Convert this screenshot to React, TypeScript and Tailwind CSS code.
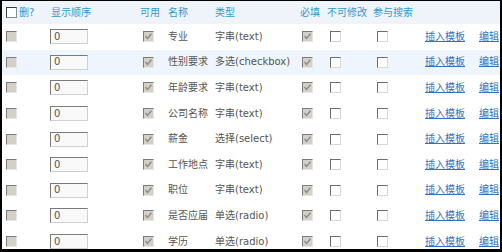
import React from "react";

const rows = [
  { name: "专业", type: "字串(text)" },
  { name: "性别要求", type: "多选(checkbox)" },
  { name: "年龄要求", type: "字串(text)" },
  { name: "公司名称", type: "字串(text)" },
  { name: "薪金", type: "选择(select)" },
  { name: "工作地点", type: "字串(text)" },
  { name: "职位", type: "字串(text)" },
  { name: "是否应届", type: "单选(radio)" },
  { name: "学历", type: "单选(radio)" },
];

const grid =
  "grid grid-cols-[48px_90px_28px_47px_85px_27px_46px_52px_54px_21px] items-center";

function GrayBox() {
  return (
    <div className="w-[11px] h-[11px] bg-[#d4d0c8] border border-t-[#7c7c7c] border-l-[#7c7c7c] border-b-[#e8e6e0] border-r-[#e8e6e0]" />
  );
}

function CheckedDisabled() {
  return (
    <div className="w-[11px] h-[11px] bg-[#d4d0c8] border border-t-[#7c7c7c] border-l-[#7c7c7c] border-b-[#e8e6e0] border-r-[#e8e6e0] flex items-center justify-center">
      <svg width="7" height="7" viewBox="0 0 7 7">
        <path d="M0.5 3 L2.5 5.5 L6.5 0.8" stroke="#8a8a8a" strokeWidth="1.4" fill="none" />
      </svg>
    </div>
  );
}

function WhiteBox() {
  return (
    <div className="w-[11px] h-[11px] bg-white border border-t-[#6c6c6c] border-l-[#6c6c6c] border-b-[#d8d8d8] border-r-[#d8d8d8]" />
  );
}

export default function App() {
  const font = "font-['DejaVu_Sans','Noto_Sans_CJK_SC',sans-serif]";
  return (
    <div
      className={`w-[502px] h-[252px] overflow-hidden bg-white border-black border-t border-l-2 border-r-2 border-b-[3px] text-[10px] leading-none ${font}`}
    >
      <div className={`${grid} h-[23px] bg-[#eef4fa] text-[#2e9ad6]`}>
        <div className="flex items-center pl-[4px] gap-[2px]">
          <div className="w-[11px] h-[11px] bg-white border border-t-[#3a3a3a] border-l-[#3a3a3a] border-b-[#8a8a8a] border-r-[#8a8a8a]" />
          <span>删?</span>
        </div>
        <div className="pl-[1px]">显示顺序</div>
        <div>可用</div>
        <div>名称</div>
        <div>类型</div>
        <div>必填</div>
        <div>不可修改</div>
        <div>参与搜索</div>
        <div />
        <div />
      </div>
      {rows.map((r, i) => (
        <div
          key={i}
          className={`${grid} h-[25.6px] text-[#555555] ${i === 1 ? "bg-[#eef5fc]" : "bg-white"}`}
        >
          <div className="pl-[4px]">
            <GrayBox />
          </div>
          <div>
            <div className="w-[38px] h-[15px] bg-[#f9f9f9] border border-t-[#7a7a7a] border-l-[#7a7a7a] border-b-[#d0d0d0] border-r-[#d0d0d0] flex items-center pl-[3px] text-[#555555]">
              0
            </div>
          </div>
          <div className="pl-[3px]">
            <CheckedDisabled />
          </div>
          <div>{r.name}</div>
          <div>{r.type}</div>
          <div className="pl-[2px]">
            <CheckedDisabled />
          </div>
          <div className="pl-[3px]">
            <WhiteBox />
          </div>
          <div className="pl-[4px]">
            <WhiteBox />
          </div>
          <div>
            <span className="text-[#2f72c4] underline">插入模板</span>
          </div>
          <div>
            <span className="text-[#2f72c4] underline">编辑</span>
          </div>
        </div>
      ))}
    </div>
  );
}
